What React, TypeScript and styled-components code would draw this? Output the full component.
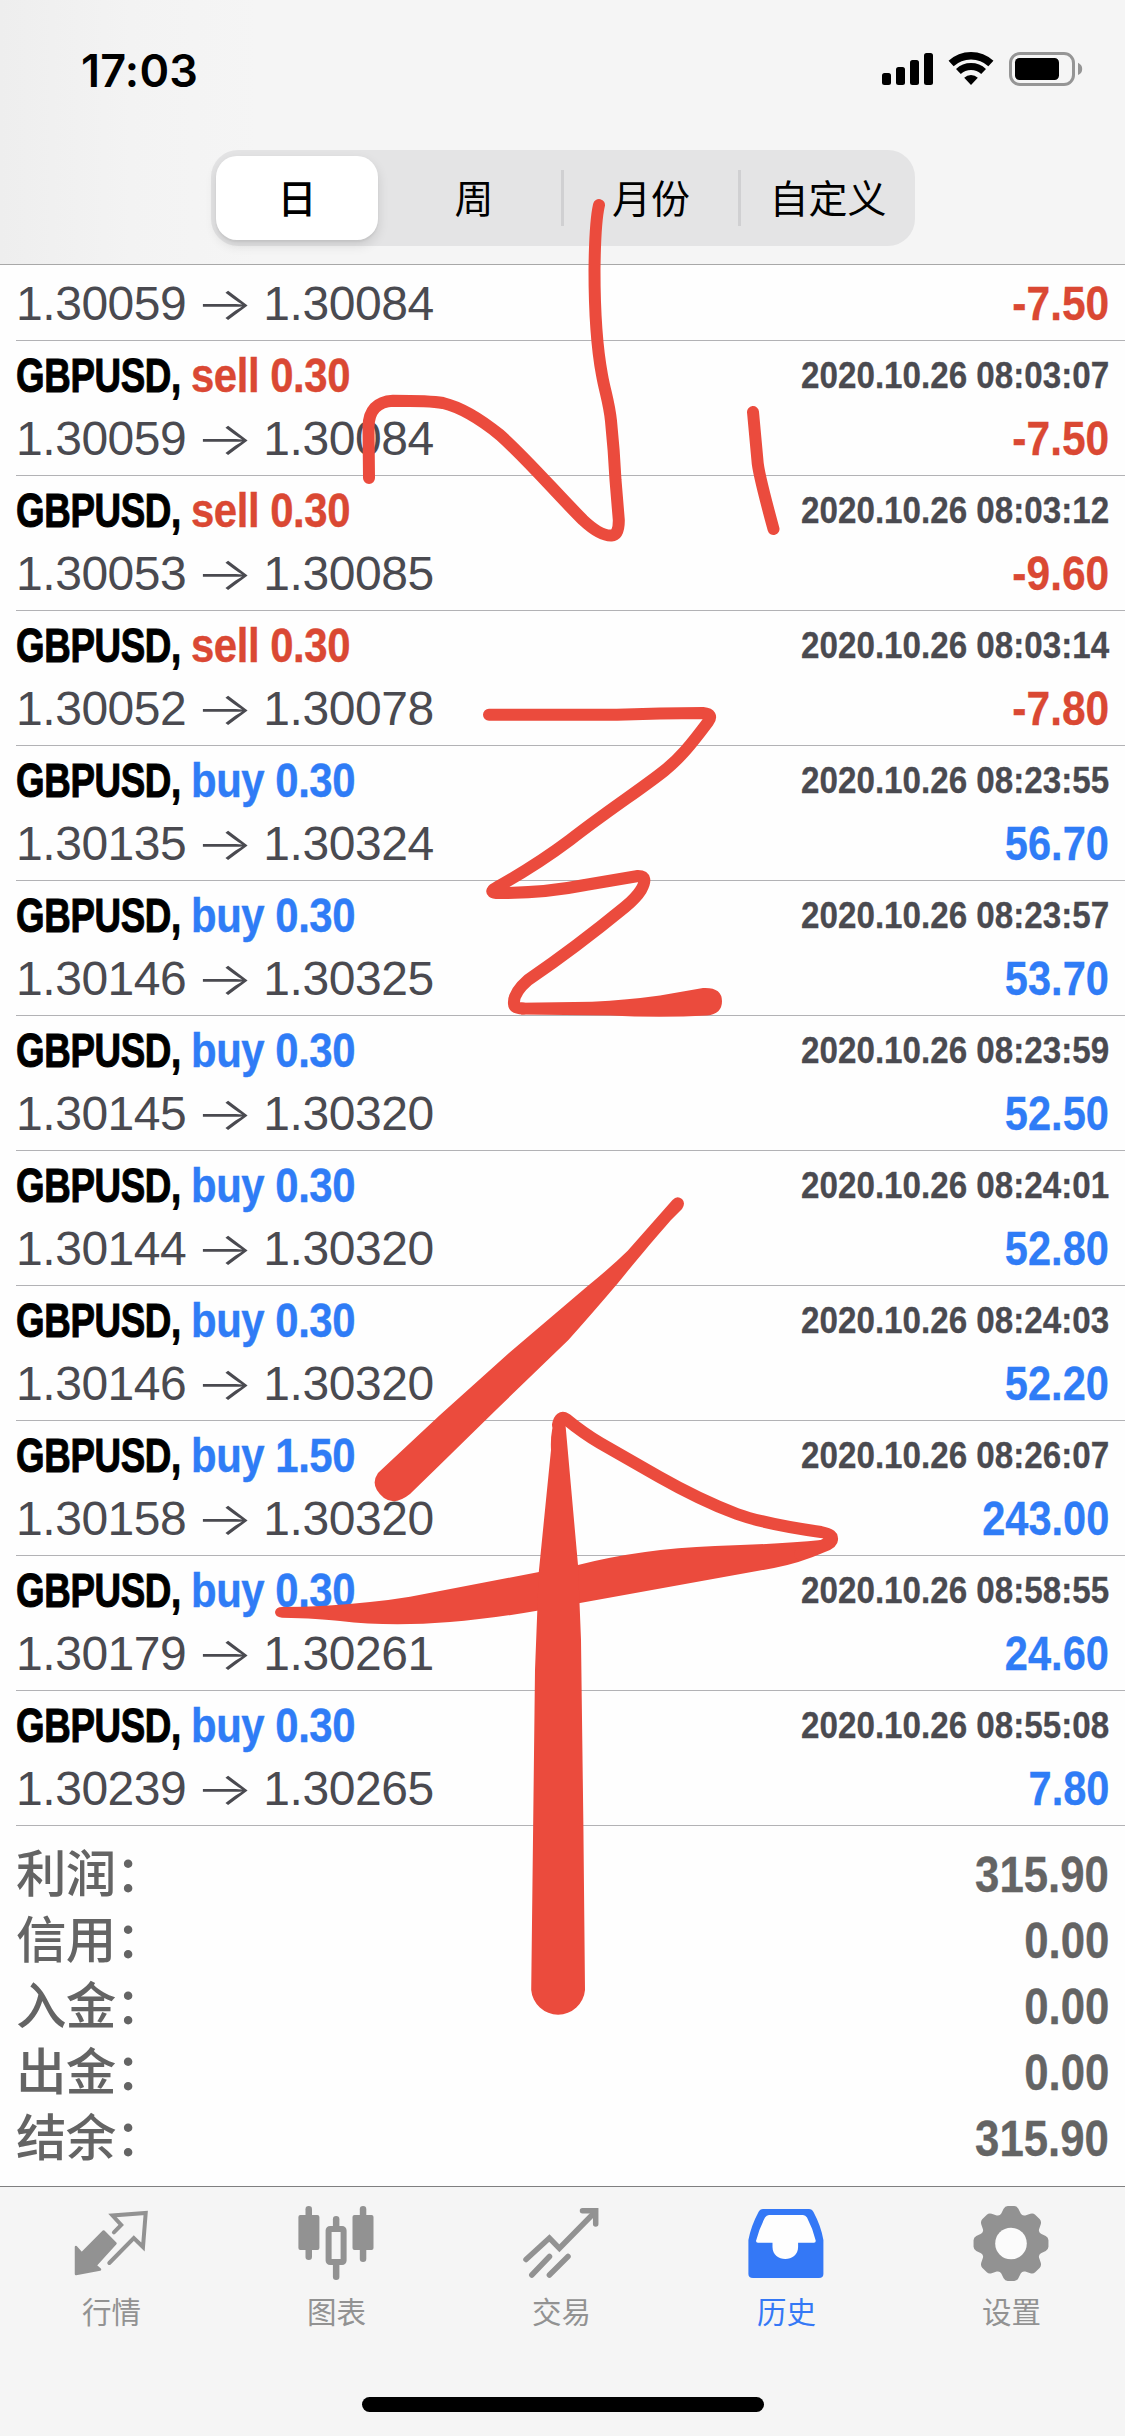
import React from "react";
import styled, { createGlobalStyle } from "styled-components";

const RED = "#da4833";
const BLUE = "#2f7cf6";

const GlobalStyle = createGlobalStyle`
  * { box-sizing: border-box; }
  html, body { margin: 0; padding: 0; background: #fefefe; }
  body { font-family: "Liberation Sans", "Noto Sans CJK SC", sans-serif; }
`;

const Screen = styled.div`
  position: relative;
  width: 1125px;
  height: 2436px;
  display: flex;
  flex-direction: column;
  overflow: hidden;
  background: #fefefe;
`;

const Header = styled.header`
  flex: none;
  height: 265px;
  display: flex;
  flex-direction: column;
  background: linear-gradient(90deg, #eeeeee 0, #f3f3f3 130px, #f5f5f5 260px);
  border-bottom: 1px solid #a8a8a8;
`;

const StatusBar = styled.div`
  flex: none;
  height: 150px;
  padding: 5px 41px 15px 81px;
  display: flex;
  align-items: center;
  justify-content: space-between;
`;

const Clock = styled.span`
  font: 600 45px/1 "Inter", sans-serif;
  letter-spacing: 0.2px;
  color: #000;
`;

const Segments = styled.nav`
  flex: none;
  width: 704px;
  height: 96px;
  margin-left: 211px;
  padding: 6px 6px 6px 5px;
  display: grid;
  grid-template-columns: repeat(4, 1fr);
  gap: 15px;
  border-radius: 27px;
  background: #e4e4e5;
`;

const Segment = styled.button<{ $active?: boolean; $divided?: boolean }>`
  margin: 0;
  padding: 0 0 4px;
  border: 0;
  position: relative;
  display: flex;
  align-items: center;
  justify-content: center;
  border-radius: 21px;
  background: ${(p) => (p.$active ? "#fff" : "transparent")};
  box-shadow: ${(p) => (p.$active ? "0 5px 12px rgba(0,0,0,.12), 0 2px 2px rgba(0,0,0,.05)" : "none")};
  font: ${(p) => (p.$active ? 500 : 400)} 39px/1 "Noto Sans CJK SC", sans-serif;
  white-space: nowrap;
  color: #000;

  &::after {
    content: "";
    display: ${(p) => (p.$divided ? "block" : "none")};
    position: absolute;
    right: -9px;
    top: 14px;
    width: 3px;
    height: 56px;
    background: #d0d0d2;
  }
`;

const List = styled.main`
  flex: 1;
  display: flex;
  flex-direction: column;
  padding-left: 16px;
`;

const Deal = styled.article`
  flex: none;
  height: 135px;
  padding-right: 16px;
  border-bottom: 1px solid #b2b2b5;
`;

const PartialDeal = styled(Deal)`
  height: 76px;
  padding-top: 11px;
`;

const Line = styled.div<{ $tall?: boolean }>`
  display: flex;
  justify-content: space-between;
  align-items: baseline;
  height: ${(p) => (p.$tall ? 70 : 54)}px;
  line-height: ${(p) => (p.$tall ? 70 : 54)}px;
  white-space: nowrap;
`;

const Title = styled.div`
  display: flex;
  font-size: 48px;
  font-weight: 700;
  letter-spacing: -0.5px;
`;

const Symbol = styled.span`
  display: block;
  width: 175px;
  transform: scaleX(0.766);
  transform-origin: left;
  color: #000;
  -webkit-text-stroke: 1px currentColor;
`;

const Side = styled.span<{ $sell?: boolean }>`
  transform: scaleX(0.872);
  transform-origin: left;
  color: ${(p) => (p.$sell ? RED : BLUE)};
  -webkit-text-stroke: 0.4px currentColor;
`;

const Stamp = styled.time`
  font-size: 37.5px;
  font-weight: 700;
  transform: translateY(-4px) scaleX(0.885);
  transform-origin: right;
  color: #4a4a50;
  -webkit-text-stroke: 0.3px currentColor;
`;

const Prices = styled.div`
  display: flex;
  align-items: baseline;
  font-size: 48px;
  letter-spacing: -0.45px;
  color: #4a4a50;
`;

const Arrow = styled.span`
  width: 77px;
  text-align: center;
  font-family: "Inter", sans-serif;
  font-weight: 300;
  font-size: 46px;
  letter-spacing: 0;
  transform: scaleX(1.33);
`;

const Profit = styled.span<{ $loss?: boolean }>`
  font-size: 47.5px;
  font-weight: 700;
  transform: scaleX(${(p) => (p.$loss ? 0.895 : 0.875)});
  transform-origin: right;
  color: ${(p) => (p.$loss ? RED : BLUE)};
  -webkit-text-stroke: 0.3px currentColor;
`;

const Summary = styled.section`
  flex: none;
  padding: 16px 16px 0 0;
`;

const SummaryRow = styled.div`
  height: 66px;
  display: flex;
  justify-content: space-between;
  align-items: center;
  color: #646464;
`;

const SummaryLabel = styled.span`
  font: 500 50.5px/66px "Liberation Sans", "Noto Sans CJK SC", sans-serif;
  letter-spacing: -0.7px;
`;

const SummaryValue = styled.span`
  font-size: 50px;
  line-height: 66px;
  font-weight: 700;
  transform: scaleX(0.875);
  transform-origin: right;
  -webkit-text-stroke: 0.3px currentColor;
`;

const TabBar = styled.footer`
  flex: none;
  height: 250px;
  display: flex;
  flex-direction: column;
  align-items: center;
  background: #f5f5f5;
  border-top: 1px solid #7f7f80;
`;

const Tabs = styled.nav`
  width: 100%;
  height: 210px;
  display: flex;
`;

const Tab = styled.a<{ $active?: boolean }>`
  flex: 1;
  padding: 17px 2px 0 0;
  display: flex;
  flex-direction: column;
  align-items: center;
  gap: 4px;
  font: 400 29.500px/44px "Noto Sans CJK SC", sans-serif;
  color: ${(p) => (p.$active ? "#3478f6" : "#929292")};
`;

const TabIcon = styled.svg`
  width: 80px;
  height: 80px;
  display: block;
`;

const HomeIndicator = styled.div`
  width: 402px;
  height: 15px;
  border-radius: 8px;
  background: #000;
`;

const Ink = styled.svg`
  position: absolute;
  left: 0;
  top: 0;
  width: 1125px;
  height: 2436px;
  pointer-events: none;
  color: #eb4b3d;
`;

const StatusIcons = () => (
  <svg width="204" height="40" viewBox="880 50 204 40">
    <rect x="882" y="73" width="9" height="12" rx="2.5" />
    <rect x="896" y="67" width="9" height="18" rx="2.5" />
    <rect x="910" y="60" width="9" height="25" rx="2.5" />
    <rect x="924" y="53" width="9" height="32" rx="2.5" />
    <path d="M951.100 63.600A29.200 29.200 0 0 1 990.900 63.600" fill="none" stroke="#000" strokeWidth="7.500" />
    <path d="M958.400 71.500A18.500 18.500 0 0 1 983.600 71.500" fill="none" stroke="#000" strokeWidth="7" />
    <path d="M971 85L964.200 77.700A10 10 0 0 1 977.800 77.700Z" />
    <rect x="1010.500" y="53.500" width="63" height="31" rx="9.500" fill="none" stroke="#959595" strokeWidth="3" />
    <rect x="1015" y="58" width="44" height="22" rx="4.500" />
    <path d="M1078 62.700q4.200 2 4.200 6.200t-4.200 6.200z" fill="#959595" />
  </svg>
);

const QuotesIcon = () => (
  <TabIcon viewBox="0 0 80 80" fill="none" stroke="currentColor" strokeLinejoin="round" strokeLinecap="round">
    <path d="M4 43V70L28 65.500L23.500 61.500L43.500 39.300L31.600 27.500L9.800 49.500Z" fill="currentColor" strokeWidth="2.500" />
    <path d="M41.900 28.300L49.200 21L40.500 11.500L73.700 9L71 43L61.800 34L37.300 59" strokeWidth="4" strokeLinejoin="miter" />
  </TabIcon>
);

const ChartIcon = () => (
  <TabIcon viewBox="0 0 80 80" fill="currentColor">
    <rect x="8.500" y="2" width="6.500" height="54" rx="3.200" />
    <rect x="1.400" y="11" width="21" height="35" rx="2" />
    <rect x="35.900" y="12" width="6.500" height="15" rx="3.200" />
    <rect x="35.900" y="56" width="6.500" height="20" rx="3.200" />
    <rect x="31.600" y="25" width="15" height="33" rx="1.500" fill="none" stroke="currentColor" strokeWidth="6" />
    <rect x="62.800" y="2" width="6.500" height="56" rx="3.200" />
    <rect x="55.500" y="11" width="21" height="35" rx="2" />
  </TabIcon>
);

const TradeIcon = () => (
  <TabIcon viewBox="0 0 80 80" fill="none" stroke="currentColor" strokeWidth="5.500" strokeLinecap="round">
    <path d="M4 55.500L27.400 34L37.400 44.300L73 8" />
    <path d="M60.500 6.700H73.700V20" />
    <path d="M9.800 71L27.500 52.500M27.400 71L46 52.500" />
  </TabIcon>
);

const HistoryIcon = () => (
  <TabIcon viewBox="0 0 80 80" fill="currentColor">
    <path d="M16 5H62Q65 5 66.500 8Q74 22 76.400 36V70Q76.400 74 72 74H6Q1.400 74 1.400 70V36Q4 22 11.500 8Q13 5 16 5Z" />
    <path
      d="M22 11Q19.500 11 18 13.500Q12 25 9 37Q9 38.700 11 38.700H25.500V43C25.500 59 51.100 59 51.100 43V38.700H67Q69 38.700 68.700 36.500Q66 25 60 13.500Q58.500 11 56 11Z"
      fill="#fefefe"
    />
  </TabIcon>
);

const polar = (radius: number, degrees: number) => {
  const a = (degrees * Math.PI) / 180;
  return `${(39 + radius * Math.sin(a)).toFixed(2)} ${(39.5 - radius * Math.cos(a)).toFixed(2)}`;
};

const gearPath =
  Array.from({ length: 8 }, (_, k) => {
    const c = k * 45;
    return `${k ? "L" : "M"}${polar(31.5, c - 18)}L${polar(35.5, c - 12)}Q${polar(37.8, c - 9)} ${polar(37.6, c - 5)}L${polar(37.6, c + 5)}Q${polar(37.8, c + 9)} ${polar(35.5, c + 12)}L${polar(31.5, c + 18)}Q${polar(29.5, c + 22.5)} ${polar(31.5, c + 27)}`;
  }).join("") + "Z";

const SettingsIcon = () => (
  <TabIcon viewBox="0 0 80 80">
    <path d={gearPath} fill="currentColor" />
    <circle cx="39" cy="39.500" r="15.800" fill="#fbfbfb" />
  </TabIcon>
);

type DealData = { side: "buy" | "sell"; lots: string; time: string; open: string; close: string; profit: string };

const d = (side: "buy" | "sell", lots: string, time: string, open: string, close: string, profit: string): DealData => ({
  side, lots, time, open, close, profit,
});

const deals: DealData[] = [
  d("sell", "0.30", "08:03:07", "1.30059", "1.30084", "-7.50"),
  d("sell", "0.30", "08:03:12", "1.30053", "1.30085", "-9.60"),
  d("sell", "0.30", "08:03:14", "1.30052", "1.30078", "-7.80"),
  d("buy", "0.30", "08:23:55", "1.30135", "1.30324", "56.70"),
  d("buy", "0.30", "08:23:57", "1.30146", "1.30325", "53.70"),
  d("buy", "0.30", "08:23:59", "1.30145", "1.30320", "52.50"),
  d("buy", "0.30", "08:24:01", "1.30144", "1.30320", "52.80"),
  d("buy", "0.30", "08:24:03", "1.30146", "1.30320", "52.20"),
  d("buy", "1.50", "08:26:07", "1.30158", "1.30320", "243.00"),
  d("buy", "0.30", "08:58:55", "1.30179", "1.30261", "24.60"),
  d("buy", "0.30", "08:55:08", "1.30239", "1.30265", "7.80"),
];

const totals = [
  ["利润：", "315.90"],
  ["信用：", "0.00"],
  ["入金：", "0.00"],
  ["出金：", "0.00"],
  ["结余：", "315.90"],
];

const tabs = [
  { label: "行情", Icon: QuotesIcon },
  { label: "图表", Icon: ChartIcon },
  { label: "交易", Icon: TradeIcon },
  { label: "历史", Icon: HistoryIcon, active: true },
  { label: "设置", Icon: SettingsIcon },
];

const PriceLine = ({ open, close, profit }: { open: string; close: string; profit: string }) => (
  <Line>
    <Prices>
      {open}
      <Arrow>→</Arrow>
      {close}
    </Prices>
    <Profit $loss={profit.startsWith("-")}>{profit}</Profit>
  </Line>
);

const Handwriting = () => (
  <Ink viewBox="0 0 1125 2436" fill="none" stroke="currentColor" strokeWidth="12" strokeLinecap="round" strokeLinejoin="round">
    <path d="M599 205Q595 222 594.500 270Q594.500 335 602 375C605 392 609 402 611 421Q614 450 615.500 480L618.800 520Q619 535 611.500 535.500Q600 536 583 520C555 492 528 460 500 435Q468 409 443 403Q430 400.700 393 400.700Q369 402 368.500 427L369 478" />
    <path d="M753 412L757.500 461Q758 472 773.500 529" />
    <path d="M489 714.700H617Q660 713 703 713Q714 714 708 722C690 746 680 758 664 771C640 790 610 809 570 840C530 870 505 882 494 889Q489 893 499 893Q545 893 585 885Q615 880 638 876Q649 876 641 890Q636 898 625 907Q575 948 528 980Q513 993 514 1004Q514 1008 523 1008.500" />
    <g fill="currentColor" stroke="none">
      <path d="M521 1002.700L592 1001.700Q628 1000 660 995.500L703 988Q722 987 722 1001.300Q722 1014 707 1015.500Q660 1018 610 1015.500L521 1014.500Z" />
      <path d="M672.500 1200Q677 1195 682 1199Q686 1203 682 1209L671 1220C653 1241 638 1258 617.800 1283.300Q590 1316 568.400 1340L497 1409L438 1466.700L410 1494Q395 1506 384 1498Q369 1486 378 1473L386.500 1465L440 1415L509 1353L588 1285.700Q610 1268 627.700 1250.700Z" />
      <path d="M838 1538Q839 1547 825 1552Q800 1563 774 1568L580 1603L537 1610.700Q490 1619 450 1622Q390 1627 340 1621Q320 1618.500 282 1617.700Q275 1617 275 1612Q276 1607 282 1607Q325 1607 370 1602Q390 1600 410 1596.700L539 1572L578 1565Q640 1549 715 1546Q780 1544 821 1540Z" />
      <path d="M556 1417Q550 1430 551 1450L538.800 1572L535 1670L531.200 1990A27 27 0 0 0 585 1990L583.400 1827L581 1640L578 1565L565.500 1425Z" />
    </g>
    <path d="M558 1425Q560 1415 566 1419Q583 1433 600 1443Q628 1459 659 1476.700Q700 1500 737 1514Q765 1524 821 1532Q835 1535 831 1540Q826 1546 800 1554" />
  </Ink>
);

export default function App() {
  return (
    <>
      <GlobalStyle />
      <Screen>
        <Header>
          <StatusBar>
            <Clock>17:03</Clock>
            <StatusIcons />
          </StatusBar>
          <Segments>
            <Segment $active>日</Segment>
            <Segment $divided>周</Segment>
            <Segment $divided>月份</Segment>
            <Segment>自定义</Segment>
          </Segments>
        </Header>
        <List>
          <PartialDeal>
            <PriceLine open="1.30059" close="1.30084" profit="-7.50" />
          </PartialDeal>
          {deals.map((deal) => (
            <Deal key={deal.time}>
              <Line $tall>
                <Title>
                  <Symbol>GBPUSD,</Symbol>
                  <Side $sell={deal.side === "sell"}>{`${deal.side} ${deal.lots}`}</Side>
                </Title>
                <Stamp>2020.10.26 {deal.time}</Stamp>
              </Line>
              <PriceLine open={deal.open} close={deal.close} profit={deal.profit} />
            </Deal>
          ))}
          <Summary>
            {totals.map(([label, value]) => (
              <SummaryRow key={label}>
                <SummaryLabel>{label}</SummaryLabel>
                <SummaryValue>{value}</SummaryValue>
              </SummaryRow>
            ))}
          </Summary>
        </List>
        <TabBar>
          <Tabs>
            {tabs.map(({ label, Icon, active }) => (
              <Tab key={label} $active={active}>
                <Icon />
                {label}
              </Tab>
            ))}
          </Tabs>
          <HomeIndicator />
        </TabBar>
        <Handwriting />
      </Screen>
    </>
  );
}
